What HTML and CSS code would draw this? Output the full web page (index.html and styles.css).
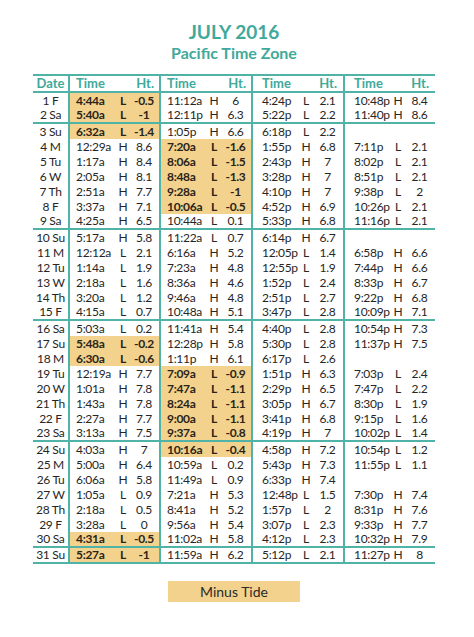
FILE: index.html
```html
<!DOCTYPE html>
<html>
<head>
<meta charset="utf-8">
<link rel="stylesheet" href="styles.css">
</head>
<body>
<div class="page">
  <h1 class="title">JULY 2016</h1>
  <h2 class="subtitle">Pacific Time Zone</h2>
  <div class="table">
    <div class="row head sep">
      <div class="d">Date</div>
      <div class="g"><span>Time</span><span>Ht.</span></div>
      <div class="g"><span>Time</span><span>Ht.</span></div>
      <div class="g"><span>Time</span><span>Ht.</span></div>
      <div class="g"><span>Time</span><span>Ht.</span></div>
    </div>

    <div class="row"><div class="d">1 F</div>
      <div class="g hl"><span class="t">4:44a</span><span class="l">L</span><span class="h">-0.5</span></div>
      <div class="g"><span class="t">11:12a</span><span class="l">H</span><span class="h">6</span></div>
      <div class="g"><span class="t">4:24p</span><span class="l">L</span><span class="h">2.1</span></div>
      <div class="g"><span class="t">10:48p</span><span class="l">H</span><span class="h">8.4</span></div></div>
    <div class="row sep"><div class="d">2 Sa</div>
      <div class="g hl"><span class="t">5:40a</span><span class="l">L</span><span class="h">-1</span></div>
      <div class="g"><span class="t">12:11p</span><span class="l">H</span><span class="h">6.3</span></div>
      <div class="g"><span class="t">5:22p</span><span class="l">L</span><span class="h">2.2</span></div>
      <div class="g"><span class="t">11:40p</span><span class="l">H</span><span class="h">8.6</span></div></div>
    <div class="row"><div class="d">3 Su</div>
      <div class="g hl"><span class="t">6:32a</span><span class="l">L</span><span class="h">-1.4</span></div>
      <div class="g"><span class="t">1:05p</span><span class="l">H</span><span class="h">6.6</span></div>
      <div class="g"><span class="t">6:18p</span><span class="l">L</span><span class="h">2.2</span></div>
      <div class="g"></div></div>
    <div class="row"><div class="d">4 M</div>
      <div class="g"><span class="t">12:29a</span><span class="l">H</span><span class="h">8.6</span></div>
      <div class="g hl"><span class="t">7:20a</span><span class="l">L</span><span class="h">-1.6</span></div>
      <div class="g"><span class="t">1:55p</span><span class="l">H</span><span class="h">6.8</span></div>
      <div class="g"><span class="t">7:11p</span><span class="l">L</span><span class="h">2.1</span></div></div>
    <div class="row"><div class="d">5 Tu</div>
      <div class="g"><span class="t">1:17a</span><span class="l">H</span><span class="h">8.4</span></div>
      <div class="g hl"><span class="t">8:06a</span><span class="l">L</span><span class="h">-1.5</span></div>
      <div class="g"><span class="t">2:43p</span><span class="l">H</span><span class="h">7</span></div>
      <div class="g"><span class="t">8:02p</span><span class="l">L</span><span class="h">2.1</span></div></div>
    <div class="row"><div class="d">6 W</div>
      <div class="g"><span class="t">2:05a</span><span class="l">H</span><span class="h">8.1</span></div>
      <div class="g hl"><span class="t">8:48a</span><span class="l">L</span><span class="h">-1.3</span></div>
      <div class="g"><span class="t">3:28p</span><span class="l">H</span><span class="h">7</span></div>
      <div class="g"><span class="t">8:51p</span><span class="l">L</span><span class="h">2.1</span></div></div>
    <div class="row"><div class="d">7 Th</div>
      <div class="g"><span class="t">2:51a</span><span class="l">H</span><span class="h">7.7</span></div>
      <div class="g hl"><span class="t">9:28a</span><span class="l">L</span><span class="h">-1</span></div>
      <div class="g"><span class="t">4:10p</span><span class="l">H</span><span class="h">7</span></div>
      <div class="g"><span class="t">9:38p</span><span class="l">L</span><span class="h">2</span></div></div>
    <div class="row"><div class="d">8 F</div>
      <div class="g"><span class="t">3:37a</span><span class="l">H</span><span class="h">7.1</span></div>
      <div class="g hl"><span class="t">10:06a</span><span class="l">L</span><span class="h">-0.5</span></div>
      <div class="g"><span class="t">4:52p</span><span class="l">H</span><span class="h">6.9</span></div>
      <div class="g"><span class="t">10:26p</span><span class="l">L</span><span class="h">2.1</span></div></div>
    <div class="row sep"><div class="d">9 Sa</div>
      <div class="g"><span class="t">4:25a</span><span class="l">H</span><span class="h">6.5</span></div>
      <div class="g"><span class="t">10:44a</span><span class="l">L</span><span class="h">0.1</span></div>
      <div class="g"><span class="t">5:33p</span><span class="l">H</span><span class="h">6.8</span></div>
      <div class="g"><span class="t">11:16p</span><span class="l">L</span><span class="h">2.1</span></div></div>
    <div class="row"><div class="d">10 Su</div>
      <div class="g"><span class="t">5:17a</span><span class="l">H</span><span class="h">5.8</span></div>
      <div class="g"><span class="t">11:22a</span><span class="l">L</span><span class="h">0.7</span></div>
      <div class="g"><span class="t">6:14p</span><span class="l">H</span><span class="h">6.7</span></div>
      <div class="g"></div></div>
    <div class="row"><div class="d">11 M</div>
      <div class="g"><span class="t">12:12a</span><span class="l">L</span><span class="h">2.1</span></div>
      <div class="g"><span class="t">6:16a</span><span class="l">H</span><span class="h">5.2</span></div>
      <div class="g"><span class="t">12:05p</span><span class="l">L</span><span class="h">1.4</span></div>
      <div class="g"><span class="t">6:58p</span><span class="l">H</span><span class="h">6.6</span></div></div>
    <div class="row"><div class="d">12 Tu</div>
      <div class="g"><span class="t">1:14a</span><span class="l">L</span><span class="h">1.9</span></div>
      <div class="g"><span class="t">7:23a</span><span class="l">H</span><span class="h">4.8</span></div>
      <div class="g"><span class="t">12:55p</span><span class="l">L</span><span class="h">1.9</span></div>
      <div class="g"><span class="t">7:44p</span><span class="l">H</span><span class="h">6.6</span></div></div>
    <div class="row"><div class="d">13 W</div>
      <div class="g"><span class="t">2:18a</span><span class="l">L</span><span class="h">1.6</span></div>
      <div class="g"><span class="t">8:36a</span><span class="l">H</span><span class="h">4.6</span></div>
      <div class="g"><span class="t">1:52p</span><span class="l">L</span><span class="h">2.4</span></div>
      <div class="g"><span class="t">8:33p</span><span class="l">H</span><span class="h">6.7</span></div></div>
    <div class="row"><div class="d">14 Th</div>
      <div class="g"><span class="t">3:20a</span><span class="l">L</span><span class="h">1.2</span></div>
      <div class="g"><span class="t">9:46a</span><span class="l">H</span><span class="h">4.8</span></div>
      <div class="g"><span class="t">2:51p</span><span class="l">L</span><span class="h">2.7</span></div>
      <div class="g"><span class="t">9:22p</span><span class="l">H</span><span class="h">6.8</span></div></div>
    <div class="row sep"><div class="d">15 F</div>
      <div class="g"><span class="t">4:15a</span><span class="l">L</span><span class="h">0.7</span></div>
      <div class="g"><span class="t">10:48a</span><span class="l">H</span><span class="h">5.1</span></div>
      <div class="g"><span class="t">3:47p</span><span class="l">L</span><span class="h">2.8</span></div>
      <div class="g"><span class="t">10:09p</span><span class="l">H</span><span class="h">7.1</span></div></div>
    <div class="row"><div class="d">16 Sa</div>
      <div class="g"><span class="t">5:03a</span><span class="l">L</span><span class="h">0.2</span></div>
      <div class="g"><span class="t">11:41a</span><span class="l">H</span><span class="h">5.4</span></div>
      <div class="g"><span class="t">4:40p</span><span class="l">L</span><span class="h">2.8</span></div>
      <div class="g"><span class="t">10:54p</span><span class="l">H</span><span class="h">7.3</span></div></div>
    <div class="row"><div class="d">17 Su</div>
      <div class="g hl"><span class="t">5:48a</span><span class="l">L</span><span class="h">-0.2</span></div>
      <div class="g"><span class="t">12:28p</span><span class="l">H</span><span class="h">5.8</span></div>
      <div class="g"><span class="t">5:30p</span><span class="l">L</span><span class="h">2.8</span></div>
      <div class="g"><span class="t">11:37p</span><span class="l">H</span><span class="h">7.5</span></div></div>
    <div class="row"><div class="d">18 M</div>
      <div class="g hl"><span class="t">6:30a</span><span class="l">L</span><span class="h">-0.6</span></div>
      <div class="g"><span class="t">1:11p</span><span class="l">H</span><span class="h">6.1</span></div>
      <div class="g"><span class="t">6:17p</span><span class="l">L</span><span class="h">2.6</span></div>
      <div class="g"></div></div>
    <div class="row"><div class="d">19 Tu</div>
      <div class="g"><span class="t">12:19a</span><span class="l">H</span><span class="h">7.7</span></div>
      <div class="g hl"><span class="t">7:09a</span><span class="l">L</span><span class="h">-0.9</span></div>
      <div class="g"><span class="t">1:51p</span><span class="l">H</span><span class="h">6.3</span></div>
      <div class="g"><span class="t">7:03p</span><span class="l">L</span><span class="h">2.4</span></div></div>
    <div class="row"><div class="d">20 W</div>
      <div class="g"><span class="t">1:01a</span><span class="l">H</span><span class="h">7.8</span></div>
      <div class="g hl"><span class="t">7:47a</span><span class="l">L</span><span class="h">-1.1</span></div>
      <div class="g"><span class="t">2:29p</span><span class="l">H</span><span class="h">6.5</span></div>
      <div class="g"><span class="t">7:47p</span><span class="l">L</span><span class="h">2.2</span></div></div>
    <div class="row"><div class="d">21 Th</div>
      <div class="g"><span class="t">1:43a</span><span class="l">H</span><span class="h">7.8</span></div>
      <div class="g hl"><span class="t">8:24a</span><span class="l">L</span><span class="h">-1.1</span></div>
      <div class="g"><span class="t">3:05p</span><span class="l">H</span><span class="h">6.7</span></div>
      <div class="g"><span class="t">8:30p</span><span class="l">L</span><span class="h">1.9</span></div></div>
    <div class="row"><div class="d">22 F</div>
      <div class="g"><span class="t">2:27a</span><span class="l">H</span><span class="h">7.7</span></div>
      <div class="g hl"><span class="t">9:00a</span><span class="l">L</span><span class="h">-1.1</span></div>
      <div class="g"><span class="t">3:41p</span><span class="l">H</span><span class="h">6.8</span></div>
      <div class="g"><span class="t">9:15p</span><span class="l">L</span><span class="h">1.6</span></div></div>
    <div class="row sep"><div class="d">23 Sa</div>
      <div class="g"><span class="t">3:13a</span><span class="l">H</span><span class="h">7.5</span></div>
      <div class="g hl"><span class="t">9:37a</span><span class="l">L</span><span class="h">-0.8</span></div>
      <div class="g"><span class="t">4:19p</span><span class="l">H</span><span class="h">7</span></div>
      <div class="g"><span class="t">10:02p</span><span class="l">L</span><span class="h">1.4</span></div></div>
    <div class="row"><div class="d">24 Su</div>
      <div class="g"><span class="t">4:03a</span><span class="l">H</span><span class="h">7</span></div>
      <div class="g hl"><span class="t">10:16a</span><span class="l">L</span><span class="h">-0.4</span></div>
      <div class="g"><span class="t">4:58p</span><span class="l">H</span><span class="h">7.2</span></div>
      <div class="g"><span class="t">10:54p</span><span class="l">L</span><span class="h">1.2</span></div></div>
    <div class="row"><div class="d">25 M</div>
      <div class="g"><span class="t">5:00a</span><span class="l">H</span><span class="h">6.4</span></div>
      <div class="g"><span class="t">10:59a</span><span class="l">L</span><span class="h">0.2</span></div>
      <div class="g"><span class="t">5:43p</span><span class="l">H</span><span class="h">7.3</span></div>
      <div class="g"><span class="t">11:55p</span><span class="l">L</span><span class="h">1.1</span></div></div>
    <div class="row"><div class="d">26 Tu</div>
      <div class="g"><span class="t">6:06a</span><span class="l">H</span><span class="h">5.8</span></div>
      <div class="g"><span class="t">11:49a</span><span class="l">L</span><span class="h">0.9</span></div>
      <div class="g"><span class="t">6:33p</span><span class="l">H</span><span class="h">7.4</span></div>
      <div class="g"></div></div>
    <div class="row"><div class="d">27 W</div>
      <div class="g"><span class="t">1:05a</span><span class="l">L</span><span class="h">0.9</span></div>
      <div class="g"><span class="t">7:21a</span><span class="l">H</span><span class="h">5.3</span></div>
      <div class="g"><span class="t">12:48p</span><span class="l">L</span><span class="h">1.5</span></div>
      <div class="g"><span class="t">7:30p</span><span class="l">H</span><span class="h">7.4</span></div></div>
    <div class="row"><div class="d">28 Th</div>
      <div class="g"><span class="t">2:18a</span><span class="l">L</span><span class="h">0.5</span></div>
      <div class="g"><span class="t">8:41a</span><span class="l">H</span><span class="h">5.2</span></div>
      <div class="g"><span class="t">1:57p</span><span class="l">L</span><span class="h">2</span></div>
      <div class="g"><span class="t">8:31p</span><span class="l">H</span><span class="h">7.6</span></div></div>
    <div class="row"><div class="d">29 F</div>
      <div class="g"><span class="t">3:28a</span><span class="l">L</span><span class="h">0</span></div>
      <div class="g"><span class="t">9:56a</span><span class="l">H</span><span class="h">5.4</span></div>
      <div class="g"><span class="t">3:07p</span><span class="l">L</span><span class="h">2.3</span></div>
      <div class="g"><span class="t">9:33p</span><span class="l">H</span><span class="h">7.7</span></div></div>
    <div class="row sep"><div class="d">30 Sa</div>
      <div class="g hl"><span class="t">4:31a</span><span class="l">L</span><span class="h">-0.5</span></div>
      <div class="g"><span class="t">11:02a</span><span class="l">H</span><span class="h">5.8</span></div>
      <div class="g"><span class="t">4:12p</span><span class="l">L</span><span class="h">2.3</span></div>
      <div class="g"><span class="t">10:32p</span><span class="l">H</span><span class="h">7.9</span></div></div>
    <div class="row sep"><div class="d">31 Su</div>
      <div class="g hl"><span class="t">5:27a</span><span class="l">L</span><span class="h">-1</span></div>
      <div class="g"><span class="t">11:59a</span><span class="l">H</span><span class="h">6.2</span></div>
      <div class="g"><span class="t">5:12p</span><span class="l">L</span><span class="h">2.1</span></div>
      <div class="g"><span class="t">11:27p</span><span class="l">H</span><span class="h">8</span></div></div>
  </div>
  <div class="legend"><span class="legend-box">Minus Tide</span></div>
</div>
</body>
</html>
```
FILE: styles.css
```css
* { box-sizing: border-box; }

body {
  margin: 0;
  background: #ffffff;
  font-family: Lato, "Open Sans", sans-serif;
  color: #262626;
}

.page {
  width: 402px;
  margin-left: 33px;
  padding-top: 20px;
}

.title {
  margin: 0;
  text-align: center;
  color: #3fa99b;
  font-weight: 700;
  font-size: 19px;
  line-height: 23px;
}

.subtitle {
  margin: 0;
  text-align: center;
  color: #3fa99b;
  font-weight: 700;
  font-size: 16px;
  line-height: 19px;
}

.table {
  margin-top: 12px;
  border-top: 2px solid #4fb4a7;
  font-size: 12px;
  letter-spacing: -0.3px;
}

.row {
  display: grid;
  grid-template-columns: 37px 91px 92px 92px 90px;
  height: 15px;
  line-height: 15px;
}

.row.sep {
  height: 16px;
  line-height: 14px;
  border-bottom: 2px solid #4fb4a7;
}

.row.head {
  height: 17px;
  line-height: 15px;
  font-size: 13px;
  font-weight: 700;
  color: #3fa99b;
  letter-spacing: 0;
}

.d {
  text-align: center;
  border-right: 2px solid #4fb4a7;
  white-space: nowrap;
}

.g {
  display: grid;
  grid-template-columns: 47px 12px 1fr;
  border-right: 2px solid #4fb4a7;
  white-space: nowrap;
}

.g:last-child { border-right: none; }

.head .g {
  display: flex;
  justify-content: space-between;
  padding: 0 5px 0 6px;
}

.head .g:nth-child(n+4) {
  padding: 0 6px 0 9px;
}

.t { padding-left: 6px; }

.g:nth-child(n+4) .t { padding-left: 9px; }

.l, .h { text-align: center; }

.hl {
  background: #f3d28e;
  font-weight: 700;
  color: #2a2419;
}

.legend {
  display: flex;
  justify-content: center;
  margin-top: 17px;
}

.legend-box {
  width: 132px;
  height: 21px;
  line-height: 21px;
  text-align: center;
  background: #f3d28e;
  font-size: 14px;
  color: #2a2a2a;
}
```
